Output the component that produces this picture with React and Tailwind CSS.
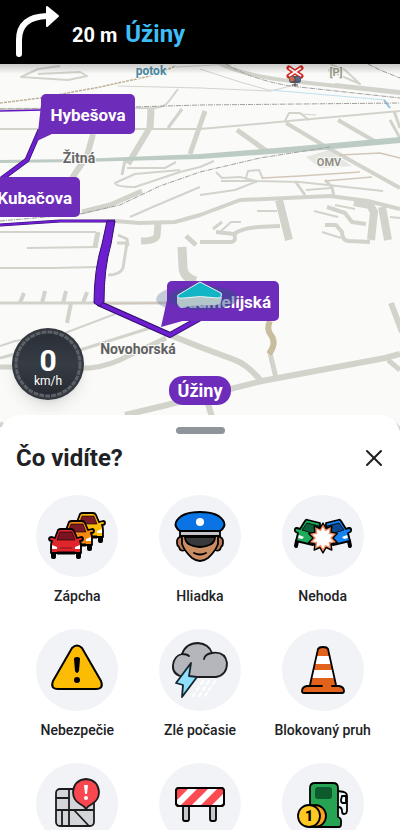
import React from 'react';
import { X } from 'lucide-react';

const roads = [
  { d: 'M60 66 L38 69 L21 77 L68 80 L87 76 L80 72 L38 74', w: 2 },
  { d: 'M118 86 L200 88 L270 91 L283 88 L300 83', w: 1 },
  { d: 'M176 67 L232 64', w: 1 },
  { d: 'M200 69 L240 82 L272 91', w: 1 },
  { d: 'M178 89 L169 101 Q165 107 155 108 L0 109', w: 2 },
  { d: 'M151 109 L150 129', w: 7 },
  { d: 'M149 129 L128 164', w: 6 },
  { d: 'M0 129 L200 129 L300 120 L400 111', w: 2 },
  { d: 'M182 109 L168 128', w: 3 },
  { d: 'M205 111 L190 154', w: 5 },
  { d: 'M93 134 L87 156 L72 178', w: 6 },
  { d: 'M125 160 L122 175', w: 3 },
  { d: 'M127 168 L165 168 L176 162', w: 2 },
  { d: 'M180 170 L135 174 L115 183 Q116 187 135 187 L180 172', w: 2 },
  { d: 'M180 172 L200 167 L214 161', w: 2 },
  { d: 'M82 212 L110 205 L142 191', w: 5 },
  { d: 'M130 217 L155 206 L200 187', w: 2 },
  { d: 'M114 221 L140 223 L175 222 L200 215 L240 200 L330 196 L368 201 L400 209', w: 4 },
  { d: 'M158 224 L157 236 Q155 241 141 241', w: 7 },
  { d: 'M0 232 L96 232', w: 2 },
  { d: 'M98 232 L95 247', w: 5 },
  { d: 'M27 248 L98 247', w: 2 },
  { d: 'M0 268 L55 268 L97 267', w: 2 },
  { d: 'M117 243 L127 243 L123 268 Q120 275 108 275', w: 3 },
  { d: 'M118 235 L127 239 L128 246', w: 3 },
  { d: 'M182 247 L183 268 Q184 278 196 281', w: 9 },
  { d: 'M186 236 L196 245', w: 5 },
  { d: 'M0 303 L168 303', w: 3 },
  { d: 'M24 293 L20 303', w: 4 },
  { d: 'M45 291 L42 303', w: 4 },
  { d: 'M66 291 L63 303', w: 4 },
  { d: 'M87 292 L83 303', w: 4 },
  { d: 'M71 303 L67 323', w: 4 },
  { d: 'M0 346 L15 341 L65 333 L115 314', w: 2 },
  { d: 'M0 358 L30 350 L80 350 L150 328', w: 3 },
  { d: 'M0 367 L90 368 Q110 366 130 355 L166 338', w: 5 },
  { d: 'M125 415 L167 405 L262 381 L385 358 L400 354', w: 6 },
  { d: 'M170 335 L200 347 L235 360 Q248 365 261 381', w: 6 },
  { d: 'M270 353 L276 378', w: 5 },
  { d: 'M388 360 L400 370', w: 5 },
  { d: 'M391 303 L402 332', w: 6 },
  { d: 'M208 404 L213 420', w: 6 },
  { d: 'M215 61 Q240 76 300 82 L400 93', w: 4 },
  { d: 'M330 64 L345 70 L360 84 L328 70', w: 2 },
  { d: 'M335 84 L400 91', w: 2 },
  { d: 'M285 121 L289 113 L300 113 L309 120', w: 2 },
  { d: 'M300 114 L316 115', w: 1 },
  { d: 'M237 130 L268 152', w: 5 },
  { d: 'M286 123 L328 148 L400 188', w: 4 },
  { d: 'M338 120 L376 142', w: 4 },
  { d: 'M390 120 L400 138', w: 3 },
  { d: 'M394 111 L400 128', w: 3 },
  { d: 'M216 172 L222 178 L240 177 L256 181 L300 182 L383 191', w: 2 },
  { d: 'M221 181 L256 181', w: 2 },
  { d: 'M246 178 L248 171 L259 170 L263 179', w: 2 },
  { d: 'M200 195 L235 190 L258 181', w: 2 },
  { d: 'M295 181 L305 195', w: 3 },
  { d: 'M306 190 L331 188', w: 2 },
  { d: 'M325 180 L332 187 L334 197', w: 3 },
  { d: 'M279 200 L289 240', w: 8 },
  { d: 'M257 211 L277 211', w: 2 },
  { d: 'M200 242 L232 242 Q237 240 234 234 L216 232', w: 4 },
  { d: 'M234 234 Q242 228 258 227 L280 226', w: 4 },
  { d: 'M213 229 L222 222', w: 3 },
  { d: 'M220 232 L231 222 L241 222', w: 2 },
  { d: 'M354 202 L370 205 L374 212 L371 240', w: 8 },
  { d: 'M382 207 L388 240', w: 8 },
  { d: 'M370 242 L348 241 Q342 240 342 232 L336 225 L325 225', w: 4 },
  { d: 'M322 232 L341 238', w: 2 },
  { d: 'M366 224 L352 222 L345 213 L327 207', w: 4 },
  { d: 'M314 211 L338 217', w: 2 },
  { d: 'M335 205 L355 209', w: 2 },
  { d: 'M390 217 L400 218', w: 2 },
  { d: 'M0 424 L6 426 M394 424 L400 430', w: 5 },
];

const railways = [
  'M0 109 L100 108 L200 105 L400 103',
  'M0 221 L80 214 L120 205 L160 186 L200 172 L260 158 L330 147',
  'M226 64 Q250 79 290 86 L400 98',
  'M368 64 L380 70 L400 78',
];

const tracks = [
  'M340 155 L380 153 L400 158',
  'M262 178 L300 176 L360 172',
  'M325 181 L372 177',
  'M165 303 L100 304',
];

const Callout = ({ x, y, width, tail, textX, anchor = 'middle', children }) => (
  <g>
    <path d={tail} fill="#6d2cb9" />
    <rect x={x} y={y} width={width} height="40" rx="5" fill="#6d2cb9" />
    <text x={textX} y={y + 27} textAnchor={anchor} fill="#fff" className="text-[17px] font-bold">
      {children}
    </text>
  </g>
);

const MapView = () => (
  <svg
    viewBox="0 64 400 371"
    preserveAspectRatio="xMidYMid slice"
    className="block w-full h-full bg-[#fafaf9]"
    role="img"
    aria-label="Mapa"
  >
    <defs>
      <linearGradient id="mapShade" x1="0" y1="0" x2="0" y2="1">
        <stop offset="0" stopColor="#000" stopOpacity="0.2" />
        <stop offset="1" stopColor="#000" stopOpacity="0" />
      </linearGradient>
    </defs>

    <path d="M306 157 L328 150 L352 166 L320 168 Z" fill="#e6e7e2" />
    <g fill="none" stroke="#d2d4cc" strokeLinejoin="round">
      {roads.map((road) => (
        <path key={road.d} d={road.d} strokeWidth={road.w} />
      ))}
    </g>
    <g fill="none" stroke="#d3c7b9" strokeWidth="1.5">
      {tracks.map((d) => (
        <path key={d} d={d} />
      ))}
    </g>
    <path d="M0 160 L80 159 L200 154 L300 146 L400 137 V143 L300 152 L200 159 L80 162 L0 163 Z" fill="#bccbc3" />
    <path d="M0 103 L40 98 L100 87 L150 76 L176 66" fill="none" stroke="#bfb097" strokeWidth="1.5" strokeDasharray="3 1" />
    <path d="M270 90 L385 100 L390 108" fill="none" stroke="#bfe0ee" strokeWidth="1" />
    <path d="M384 100 L390 108" stroke="#8cc4de" strokeWidth="2" />
    <g fill="none" stroke="#a0a19e" strokeWidth="1" strokeDasharray="5 1 1 1">
      {railways.map((d) => (
        <path key={d} d={d} />
      ))}
    </g>
    <path d="M270 321 Q266 329 271 335 Q277 343 269 354" fill="none" stroke="#c9bda0" strokeWidth="6" />

    {/* level crossing */}
    <g>
      <path d="M289 68 L301 76 M301 68 L289 76" stroke="#d8261f" strokeWidth="5" strokeLinecap="round" />
      <path d="M289 68 L301 76 M301 68 L289 76" stroke="#fff" strokeWidth="2" />
      <rect x="289" y="76" width="12" height="7" rx="3" fill="#4d5360" />
      <circle cx="292" cy="79" r="2.5" fill="#c9694a" />
      <circle cx="298" cy="79" r="2.5" fill="#5a6684" />
      <path d="M295 83 V86 M292 85 H298" stroke="#444" />
    </g>

    <g stroke="#fafaf9" strokeWidth="2" paintOrder="stroke" textAnchor="middle" className="font-bold">
      <text x="151" y="75" fill="#4a8ca6" className="text-[12px]">potok</text>
      <text x="79" y="163" fill="#686868" className="text-[14px]">Žitná</text>
      <text x="138" y="354" fill="#606060" className="text-[14px]">Novohorská</text>
      <text x="329" y="166" fill="#8f8f84" className="text-[11px]">OMV</text>
      <text x="336" y="76" fill="#9a9a8c" className="text-[11px]">[P]</text>
    </g>

    {/* route */}
    <g fill="none" strokeLinejoin="round">
      <path d="M0 111 L42 110" stroke="#6414c4" strokeWidth="1.5" />
      <path d="M40 130 L27 160 L0 180" stroke="#32106b" strokeWidth="5" />
      <path d="M40 130 L27 160 L0 180" stroke="#6d1ed0" strokeWidth="3.5" />
      <path d="M0 225 L60 221 L115 221" stroke="#32106b" strokeWidth="3" />
      <path d="M0 225 L60 221 L115 221" stroke="#6d1ed0" strokeWidth="2" />
      <path d="M98 303 L170 335 L206 315" stroke="#32106b" strokeWidth="6" />
      <path d="M98 303 L170 335 L206 315" stroke="#6d1ed0" strokeWidth="4" />
    </g>
    <path
      d="M107 221 L115 221 L111 244 Q104 268 104 302 L99 306 L94 303 Q94 270 102 244 Z"
      fill="#6d1ed0"
      stroke="#32106b"
      strokeWidth="1"
    />

    <ellipse cx="198" cy="299" rx="42" ry="14" fill="#7386a8" opacity="0.4" />
    <Callout x={41} y={94} width={94} textX={88} tail="M41 105 L37 141 L54 133 Z">Hybešova</Callout>
    <Callout x={-16} y={177} width={96} textX={72} anchor="end" tail="M0 177 L10 177 L10 190 Z">Kubačova</Callout>
    <Callout x={167} y={281} width={112} textX={271} anchor="end" tail="M167 300 L161 327 L186 320 Z">Sadmelijská</Callout>
    <ellipse cx="203" cy="298" rx="35" ry="12" fill="#314f86" opacity="0.5" />

    {/* own position */}
    <path d="M177 296 L177 303 Q178 307 184 307 L190 306 L216 305 Q222 304 222 297 Z" fill="#b3c6c9" />
    <path d="M200 282 L221 293 Q223 298 217 298 Q200 295 184 298 Q176 299 178 295 Z" fill="#12b5c5" stroke="#e9f6f6" strokeWidth="1" />

    <rect x="169" y="376" width="62" height="29" rx="14" fill="#6d2cb9" />
    <text x="200" y="397" textAnchor="middle" fill="#fff" className="text-[18px] font-bold">Úžiny</text>

    <rect x="0" y="64" width="400" height="10" fill="url(#mapShade)" />
  </svg>
);

const Speedometer = () => (
  <div className="absolute left-3 bottom-[35px] w-[72px] h-[72px] rounded-full bg-[#33383e] p-[2px] shadow-lg">
    <div className="relative w-full h-full">
      <svg viewBox="0 0 68 68" className="absolute inset-0 w-full h-full">
        <defs>
          <linearGradient id="dial" x1="0" y1="0" x2="0" y2="1">
            <stop offset="0" stopColor="#2a2f36" />
            <stop offset="0.5" stopColor="#363c44" />
            <stop offset="1" stopColor="#262a30" />
          </linearGradient>
        </defs>
        <circle cx="34" cy="34" r="33" fill="url(#dial)" />
        <circle cx="34" cy="34" r="32" fill="none" stroke="#5c6167" strokeWidth="3" strokeDasharray="5 1" />
      </svg>
      <div className="relative h-full pt-2 flex flex-col items-center justify-center text-white">
        <span className="text-[30px] leading-[26px] font-bold">0</span>
        <span className="text-xs leading-[14px]">km/h</span>
      </div>
    </div>
  </div>
);

const Car = ({ x, y, body, shade }) => (
  <g transform={`translate(${x} ${y})`} strokeLinejoin="round">
    <rect x="2" y="22" width="5" height="9" rx="2" fill="#000" />
    <rect x="27" y="22" width="5" height="9" rx="2" fill="#000" />
    <path
      d="M9 2 Q10 1 12 1 H22 Q24 1 25 3 L28 10 L32 9 Q34 9 34 11 Q34 13 31 13 Q32 15 32 18 V25 H2 V18 Q2 15 3 13 Q0 13 0 11 Q0 9 3 9 L6 10 Z"
      fill={body}
      stroke="#000"
      strokeWidth="1.8"
    />
    <path d="M11 4 H23 L26 12 H8 Z" fill={shade} stroke="#000" strokeWidth="0.6" />
    <path d="M3 17 L8 19 V21 H3 Z M31 17 L26 19 V21 H31 Z" fill="#fff" />
    <path d="M11 20 H23" stroke={shade} strokeWidth="1" />
    <path d="M8 25 H26" stroke="#000" strokeWidth="3" />
  </g>
);

const JamIcon = () => (
  <>
    <Car x={35} y={17} body="#fdbc08" shade="#7a1a26" />
    <Car x={24} y={25} body="#f48a12" shade="#7a1a26" />
    <Car x={13} y={33} body="#e0262c" shade="#7a1420" />
  </>
);

const PoliceIcon = () => (
  <g stroke="#000" strokeWidth="1.8" strokeLinejoin="round">
    <path d="M24 41 Q17 42 18 48 Q18 51 20 52 Q21 57 26 55 Z" fill="#b9794f" />
    <path d="M58 41 Q65 42 64 48 Q64 51 62 52 Q61 57 56 55 Z" fill="#b9794f" />
    <path d="M23 41 V49 Q26 57 33 63 Q41 69 49 63 Q56 57 59 49 V41 Z" fill="#c98c63" />
    <path d="M26 42 H56 Q56 51 41 52 Q26 51 26 42 Z" fill="#37393d" />
    <path d="M21 36 Q15 32 17 27 Q22 17 41 17 Q60 17 65 27 Q67 32 61 36 Z" fill="#0b74e5" />
    <path d="M21 36 H61 V41 H21 Z" fill="#c3c5ca" />
    <circle cx="41" cy="27" r="4" fill="#fff" stroke="none" />
    <path d="M35 58 Q41 61 47 58" fill="none" strokeLinecap="round" />
  </g>
);

const CrashedCar = ({ body, shade }) => (
  <g stroke="#000" strokeWidth="1.8" strokeLinejoin="round">
    <path d="M15 46 L14 51" strokeWidth="4" strokeLinecap="round" />
    <path
      d="M18 34 L23 26 Q24 24 26 25 L38 28 V48 L31 50 L14 46 L16 38 Q12 37 13 34 Q14 32 18 34 Z"
      fill={body}
    />
    <path d="M25 28 L37 31 L33 39 L20 35 Z" fill={shade} strokeWidth="0.8" />
    <path d="M17 40 L22 42 L20 44 L16 43 Z" fill="#fff" stroke="none" />
  </g>
);

const burst = (outer, inner) => {
  const points = [];
  for (let i = 0; i < 20; i++) {
    const r = i % 2 === 0 ? outer : inner;
    const a = (Math.PI * i) / 10 - Math.PI / 2;
    points.push(`${(41 + r * Math.cos(a)).toFixed(1)},${(43 + r * Math.sin(a)).toFixed(1)}`);
  }
  return points.join(' ');
};

const CrashIcon = () => (
  <>
    <CrashedCar body="#1eab5c" shade="#0d6138" />
    <g transform="translate(82 0) scale(-1 1)">
      <CrashedCar body="#1583f0" shade="#0b488f" />
    </g>
    <polygon points={burst(15, 10)} fill="#f08a5d" stroke="#000" strokeWidth="1.4" strokeLinejoin="round" />
    <polygon points={burst(11, 7)} fill="#fff" />
  </>
);

const HazardIcon = () => (
  <>
    <path
      d="M36 19 Q41 14 46 19 L65 52 Q68 60 60 60 H22 Q14 60 17 52 Z"
      fill="#fdbc04"
      stroke="#000"
      strokeWidth="2"
      strokeLinejoin="round"
    />
    <path d="M38 30 Q38 28 41 28 Q44 28 44 30 L43 42 Q42 44 41 44 Q40 44 39 42 Z" fill="#000" />
    <circle cx="41" cy="51" r="3" fill="#000" />
  </>
);

const WeatherIcon = () => (
  <g strokeLinejoin="round" strokeLinecap="round">
    <path d="M44 52 l-2 3 M50 52 l-2 3 M56 52 l-2 3 M40 58 l-2 3 M46 58 l-2 3 M52 58 l-2 3 M36 64 l-2 3 M42 64 l-2 3 M48 64 l-2 3" stroke="#fff" strokeWidth="2" />
    <path
      d="M25 48 Q13 46 14 36 Q15 27 23 25 Q27 14 39 14 Q50 15 53 24 Q66 22 68 34 Q68 46 57 48 Z"
      fill="#b4b6bb"
      stroke="#1b1b1d"
      strokeWidth="1.8"
    />
    <path d="M23 25 Q28 25 30 27 M53 24 Q46 25 45 30" fill="none" stroke="#1b1b1d" strokeWidth="1.8" />
    <path d="M32 34 L17 54 L24 56 L23 68 L38 48 L30 47 Z" fill="#8fe0fb" stroke="#15242c" strokeWidth="1.8" />
  </g>
);

const ConeIcon = () => (
  <g strokeLinejoin="round" strokeLinecap="round">
    <path d="M36 20 Q37 18 41 18 Q45 18 46 20 L54 57 H28 Z" fill="#e2621b" />
    <path d="M34.5 27 H47.5 L49.3 35 H32.7 Z M31.5 41 H50.5 L52.3 49 H29.7 Z" fill="#fff" />
    <path
      d="M28 56 L36 20 Q37 18 41 18 Q45 18 46 20 L54 56"
      fill="none"
      stroke="#000"
      strokeWidth="1.8"
    />
    <path d="M24 57 H58 Q62 58 62 62 Q62 64 59 64 H23 Q20 64 20 62 Q20 58 24 57 Z" fill="#e2621b" />
    <path
      d="M40 57 H25 Q20 58 20 62 Q20 64 22 64 H60 Q62 64 62 62 Q62 58 57 57 H50"
      fill="none"
      stroke="#000"
      strokeWidth="1.8"
    />
  </g>
);

const MapIssueIcon = () => (
  <g stroke="#1c1c1e" strokeWidth="1.8" strokeLinejoin="round">
    <rect x="20" y="26" width="38" height="37" rx="4" fill="#d3d5d8" />
    <path d="M33 26 V63 M20 35 H33 M20 47 H58 M26 47 V63 M38 47 L53 63" fill="none" />
    <path d="M50 46 Q48 43 44 41 Q37 37 37 29 Q38 17 50 16 Q62 17 63 29 Q63 37 56 41 Q52 43 50 46 Z" fill="#f8474e" />
    <path d="M48 22 H52 L51 31 H49 Z" fill="#fff" stroke="none" />
    <circle cx="50" cy="35" r="2" fill="#fff" stroke="none" />
  </g>
);

const ClosureIcon = () => (
  <g stroke="#000" strokeWidth="1.8" strokeLinejoin="round">
    <path d="M24 42 H30 V56 Q30 58 28 58 H26 Q24 58 24 56 Z" fill="#c6c8cc" />
    <path d="M51 42 H57 V56 Q57 58 55 58 H53 Q51 58 51 56 Z" fill="#c6c8cc" />
    <rect x="17" y="25" width="48" height="18" rx="3" fill="#fff" />
    <path d="M18 26 H29 L18 37 Z M38 26 H49 L33 42 H22 Z M58 26 H64 V31 L53 42 H42 Z" fill="#fb4c52" stroke="none" />
    <rect x="17" y="25" width="48" height="18" rx="3" fill="none" />
  </g>
);

const FuelIcon = () => (
  <g stroke="#000" strokeWidth="1.8" strokeLinejoin="round" strokeLinecap="round">
    <path d="M28 64 V25 Q28 20 33 20 H51 Q56 20 56 25 V54 Q60 55 59 61 Q59 64 57 64 Z" fill="#26a453" />
    <rect x="33" y="24" width="17" height="12" rx="3" fill="#0d5a2c" stroke="none" />
    <path d="M56 28 L62 29 Q65 30 65 33 V47 Q65 51 62 51 Q60 51 60 48 Q60 44 56 44" fill="none" />
    <path d="M60 33 H64 V40 H61 Q59 40 59 37 Z" fill="#fff" />
    <circle cx="33" cy="53" r="11" fill="#f5a321" />
    <circle cx="27" cy="53" r="11" fill="#fdc922" />
    <text x="27" y="58" textAnchor="middle" fill="#000" stroke="none" className="text-[14px] font-black">1</text>
  </g>
);

const reports = [
  { id: 'jam', label: 'Zápcha', Icon: JamIcon },
  { id: 'police', label: 'Hliadka', Icon: PoliceIcon },
  { id: 'crash', label: 'Nehoda', Icon: CrashIcon },
  { id: 'hazard', label: 'Nebezpečie', Icon: HazardIcon },
  { id: 'weather', label: 'Zlé počasie', Icon: WeatherIcon },
  { id: 'lane', label: 'Blokovaný pruh', Icon: ConeIcon },
  { id: 'map', name: 'Chyba mapy', Icon: MapIssueIcon },
  { id: 'closure', name: 'Uzávierka', Icon: ClosureIcon },
  { id: 'fuel', name: 'Ceny palív', Icon: FuelIcon },
];

const ReportSheet = () => (
  <section className="relative flex-1 min-h-0 -mt-5 pt-3 flex flex-col bg-white rounded-t-[20px]">
    <div className="shrink-0 mx-auto w-[49px] h-[7px] rounded-full bg-[#90959c]"></div>
    <div className="shrink-0 mt-2 px-4 h-8 flex items-center justify-between">
      <h1 className="text-2xl font-bold text-[#202124]">Čo vidíte?</h1>
      <button type="button" aria-label="Zavrieť" className="-mr-1 text-[#202124]">
        <X size={28} strokeWidth={1.75} />
      </button>
    </div>
    <div className="flex-1 min-h-0 overflow-hidden mt-[21px] px-4">
      <div className="grid grid-cols-3 gap-y-[23px]">
        {reports.map(({ id, label, name, Icon }) => (
          <button key={id} type="button" aria-label={name} className="flex flex-col items-center">
            <span className="w-[82px] h-[82px] rounded-full bg-[#f2f3f7]">
              <svg viewBox="0 0 82 82" className="w-full h-full" aria-hidden="true">
                <Icon />
              </svg>
            </span>
            {label && <span className="mt-[9px] text-sm leading-5 font-medium text-[#202124]">{label}</span>}
          </button>
        ))}
      </div>
    </div>
  </section>
);

const App = () => (
  <div className="h-screen flex flex-col overflow-hidden bg-white font-['Roboto','Noto_Sans',sans-serif]">
    <header className="shrink-0 h-16 px-3 flex items-center bg-black">
      <svg viewBox="0 0 48 56" className="w-12 h-14 shrink-0" aria-hidden="true">
        <path d="M7 50 V36 Q7 13 35 12" fill="none" stroke="#fff" strokeWidth="6" strokeLinecap="round" />
        <path d="M35 3 L46 12 L35 22 Z" fill="#fff" stroke="#fff" strokeWidth="2" strokeLinejoin="round" />
      </svg>
      <p className="ml-3 mt-1 flex items-baseline gap-2">
        <span className="text-xl font-bold text-white">20 m</span>
        <span className="text-2xl font-bold text-[#3fbdf6]">Úžiny</span>
      </p>
    </header>
    <main className="flex-1 min-h-0 flex flex-col">
      <div className="relative shrink-0 h-[371px]">
        <MapView />
        <Speedometer />
      </div>
      <ReportSheet />
    </main>
  </div>
);

export default App;
